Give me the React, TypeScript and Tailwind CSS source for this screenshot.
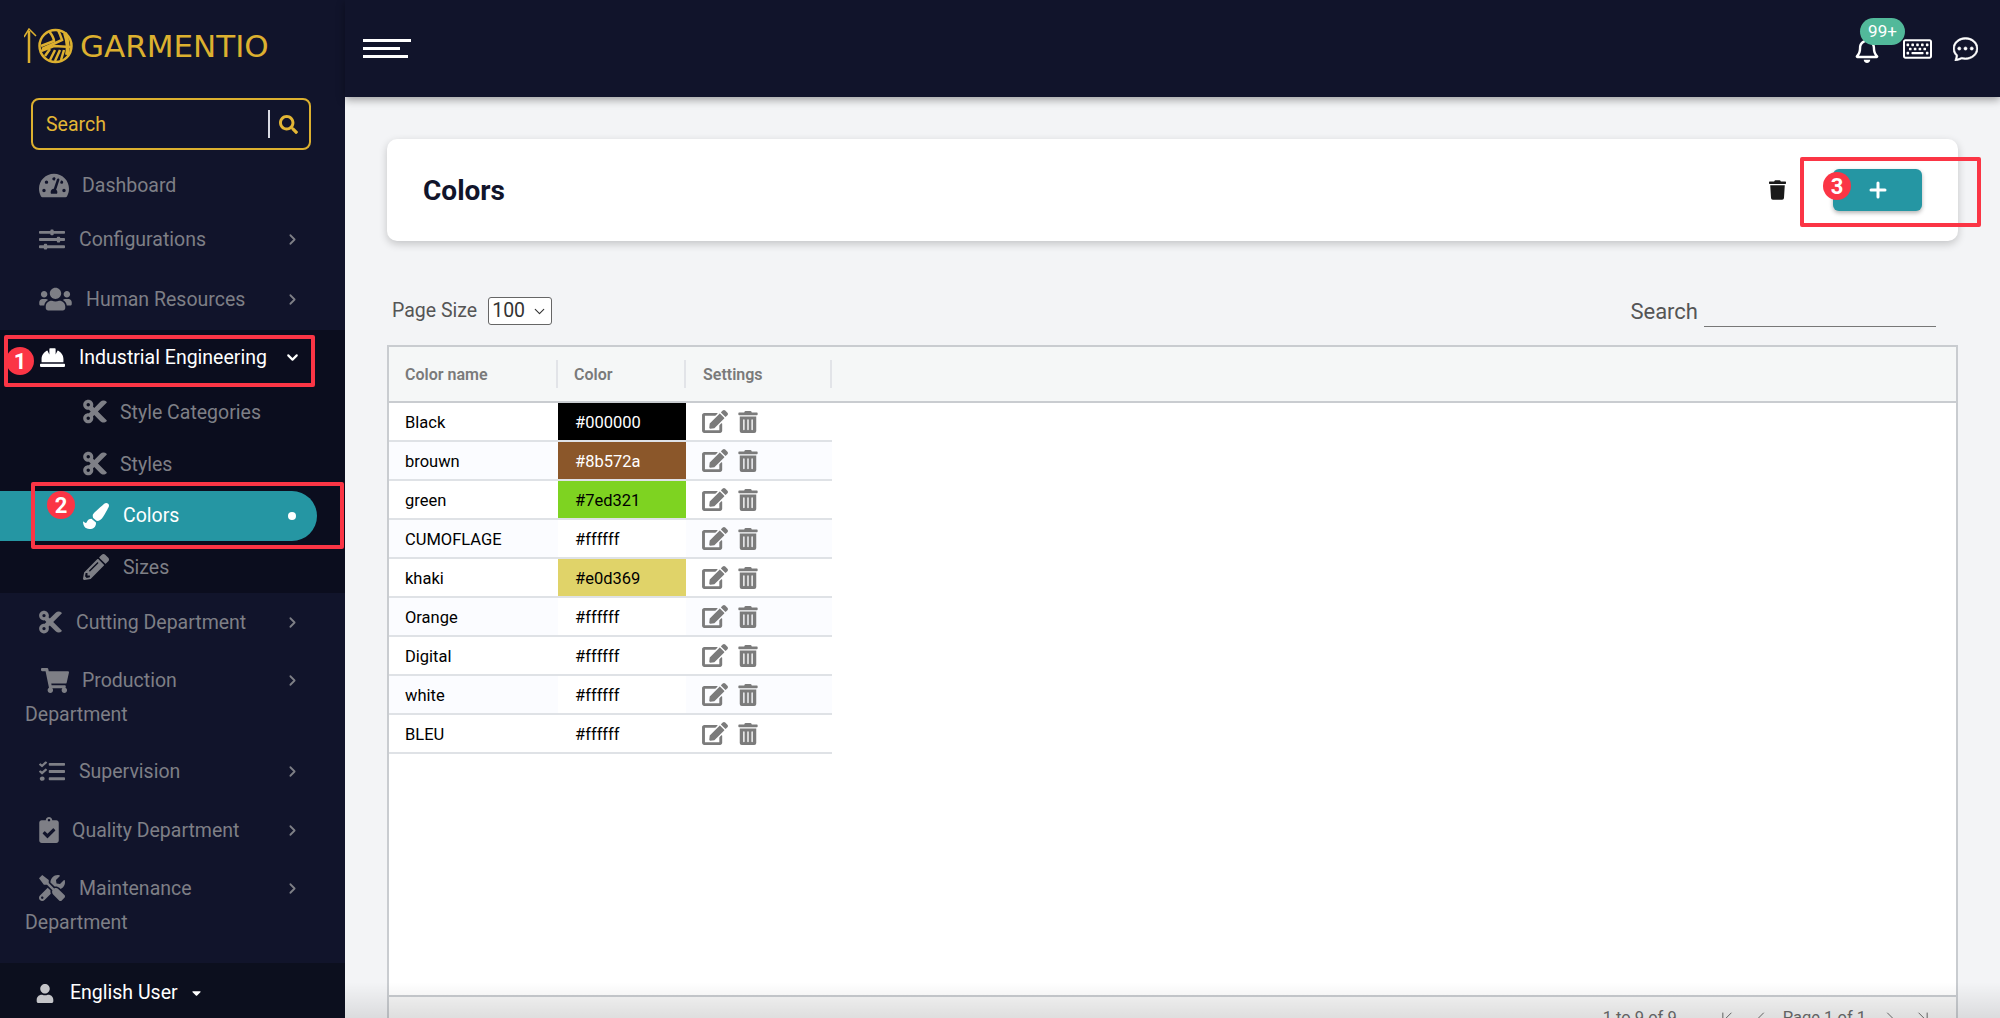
import { ChevronDown, ChevronRight, ChevronLeft, ChevronFirst, ChevronLast, Plus } from 'lucide-react';
import {
  FaTachometerAlt,
  FaSlidersH,
  FaUsers,
  FaHardHat,
  FaCut,
  FaPaintBrush,
  FaPencilAlt,
  FaShoppingCart,
  FaTasks,
  FaClipboardCheck,
  FaTools,
  FaUser,
  FaSearch,
  FaCaretDown,
  FaEdit,
  FaTrashAlt,
  FaTrash,
  FaRegBell,
  FaRegKeyboard,
} from 'react-icons/fa';
import { BsChatDots } from 'react-icons/bs';

const rows = [
  { name: 'Black', color: '#000000', cell: 'bg-[#000000] text-white' },
  { name: 'brouwn', color: '#8b572a', cell: 'bg-[#8b572a] text-white' },
  { name: 'green', color: '#7ed321', cell: 'bg-[#7ed321] text-black' },
  { name: 'CUMOFLAGE', color: '#ffffff', cell: 'bg-white text-black' },
  { name: 'khaki', color: '#e0d369', cell: 'bg-[#e0d369] text-black' },
  { name: 'Orange', color: '#ffffff', cell: 'bg-white text-black' },
  { name: 'Digital', color: '#ffffff', cell: 'bg-white text-black' },
  { name: 'white', color: '#ffffff', cell: 'bg-white text-black' },
  { name: 'BLEU', color: '#ffffff', cell: 'bg-white text-black' },
];

function Logo() {
  return (
    <svg width="50" height="36" viewBox="0 0 50 36" fill="none" className="shrink-0">
      {/* needle */}
      <path d="M5 35V3" stroke="#dcb02f" strokeWidth="2.5" />
      <path d="M0 9L5 1L12 8" stroke="#dcb02f" strokeWidth="1.5" />
      {/* yarn ball */}
      <circle cx="31.5" cy="18" r="16" fill="#11142b" stroke="#dcb02f" strokeWidth="2.5" />
      <path d="M25 3C28 7 30 10 30 13L17 18" stroke="#dcb02f" strokeWidth="2.5" />
      <path d="M34 2C36 6 37 9 38 12L18 21" stroke="#dcb02f" strokeWidth="2.5" />
      <path d="M41 5C43 11 45 18 43 27" stroke="#dcb02f" strokeWidth="4" />
      <path d="M17 23L30 18L47 19" stroke="#dcb02f" strokeWidth="2.5" />
      <path d="M21 28L26 21M26 32L31 22M31 33L36 22M37 32L40 22" stroke="#dcb02f" strokeWidth="2.5" />
    </svg>
  );
}

function NavRow({
  icon,
  label,
  box,
  height,
  arrow = true,
}: {
  icon: React.ReactNode;
  label: string;
  box: string;
  height: string;
  arrow?: boolean;
}) {
  return (
    <div className={`flex items-center pl-[39px] pr-[44px] text-[#7e7f86] ${height}`}>
      <span className={`flex items-center shrink-0 ${box}`}>{icon}</span>
      <span className="flex-1 text-[19.5px] leading-none whitespace-nowrap pt-[2px]">{label}</span>
      {arrow && <ChevronRight size={17} strokeWidth={2.5} className="shrink-0 mt-[1px]" />}
    </div>
  );
}

function SubRow({ icon, label, box, height }: { icon: React.ReactNode; label: string; box: string; height: string }) {
  return (
    <div className={`flex items-center pl-[83px] text-[#7e7f86] ${height}`}>
      <span className={`flex items-center shrink-0 ${box}`}>{icon}</span>
      <span className="text-[19.5px] leading-none pt-[3px]">{label}</span>
    </div>
  );
}

function Sidebar() {
  return (
    <aside className="w-[345px] h-[1018px] shrink-0 bg-[#11142b] flex flex-col">
      <div className="h-[98px] flex items-center pl-[24px] pb-[6px] gap-[6px]">
        <Logo />
        <span className="[font-family:'DejaVu_Sans',sans-serif] text-[31px] leading-none text-[#dcb02f]">GARMENTIO</span>
      </div>
      <div className="ml-[31px] w-[280px] h-[52px] border-2 border-[#dcb02f] rounded-[8px] flex items-center pl-[13px] text-[#e3b635]">
        <span className="flex-1 text-[19.5px] leading-none pt-[1px]">Search</span>
        <span className="w-[2px] h-[28px] bg-[#d9dbe4] mr-[9px]" />
        <FaSearch className="w-[19px] h-[19px] mr-[11px]" />
      </div>
      <div className="h-[8px]" />
      <NavRow icon={<FaTachometerAlt className="w-[30px] h-[27px]" />} label="Dashboard" box="w-[43px]" height="h-[54px]" arrow={false} />
      <NavRow icon={<FaSlidersH preserveAspectRatio="none" className="w-[26px] h-[23px]" />} label="Configurations" box="w-[40px]" height="h-[54px]" />
      <NavRow icon={<FaUsers className="w-[33px] h-[26px]" />} label="Human Resources" box="w-[47px]" height="h-[65px]" />
      <div className="h-[263px] -mt-[1px] bg-[#0b0d1e]">
        <div className="flex items-center pl-[39px] pr-[44px] h-[54px] text-white">
          <span className="flex items-center shrink-0 w-[40px]">
            <FaHardHat className="w-[31px] h-[25px] -ml-[2px]" />
          </span>
          <span className="flex-1 text-[19.5px] leading-none whitespace-nowrap pt-[2px]">Industrial Engineering</span>
          <ChevronDown size={17} strokeWidth={3} className="mt-[1px]" />
        </div>
        <SubRow icon={<FaCut className="w-[24px] h-[27px]" />} label="Style Categories" box="w-[37px]" height="h-[54px]" />
        <SubRow icon={<FaCut className="w-[24px] h-[27px]" />} label="Styles" box="w-[37px]" height="h-[50px]" />
        <div className="mt-[3px] h-[50px] w-[317px] bg-[#2596a3] rounded-r-[25px] flex items-center pl-[83px] pr-[21px] text-white">
          <span className="flex items-center shrink-0 w-[40px]">
            <FaPaintBrush className="w-[26px] h-[26px]" />
          </span>
          <span className="flex-1 text-[19.5px] leading-none">Colors</span>
          <span className="w-[8px] h-[8px] rounded-full bg-white" />
        </div>
        <div className="flex items-center pl-[83px] text-[#7e7f86] h-[52px]">
          <span className="flex items-center shrink-0 w-[40px]">
            <FaPencilAlt className="w-[26px] h-[26px]" />
          </span>
          <span className="text-[19.5px] leading-none pt-[2px]">Sizes</span>
        </div>
      </div>
      <NavRow icon={<FaCut className="w-[23px] h-[26px]" />} label="Cutting Department" box="w-[37px]" height="h-[58px]" />
      <div className="pt-[14px]">
        <NavRow icon={<FaShoppingCart className="w-[28px] h-[25px] ml-[2px]" />} label="Production" box="w-[43px]" height="h-[30px]" />
        <div className="h-[38px] flex items-center pl-[25px] pt-[2px] text-[19.5px] leading-none text-[#7e7f86]">Department</div>
      </div>
      <NavRow icon={<FaTasks preserveAspectRatio="none" className="w-[26px] h-[23px]" />} label="Supervision" box="w-[40px]" height="h-[76px]" />
      <NavRow icon={<FaClipboardCheck className="w-[20px] h-[26px]" />} label="Quality Department" box="w-[33px]" height="h-[42px]" />
      <div className="pt-[22px]">
        <NavRow icon={<FaTools className="w-[26px] h-[26px]" />} label="Maintenance" box="w-[40px]" height="h-[30px]" />
        <div className="h-[38px] flex items-center pl-[25px] pt-[2px] text-[19.5px] leading-none text-[#7e7f86]">Department</div>
      </div>
      <div className="mt-auto h-[55px] bg-[#0c0f1e] flex items-center pl-[36px] pt-[5px] text-white">
        <FaUser className="w-[18px] h-[19px] mr-[16px] text-[#c4c4c8]" />
        <span className="text-[19.5px] leading-none">English User</span>
        <FaCaretDown className="w-[11px] h-[14px] ml-[13px]" />
      </div>
    </aside>
  );
}

function Grid() {
  return (
    <div className="mt-[20px] mx-[42px] h-[698px] shrink-0 border-2 border-[#c9ccd0] bg-white flex flex-col">
      <div className="h-[56px] shrink-0 bg-[#f5f7f7] border-b-2 border-[#c9ccd0] flex items-center text-[16px] font-semibold text-[#7a7a7a]">
        <div className="w-[169px] h-[28px] pl-[16px] pt-[1px] flex items-center border-r-2 border-[#e2e4e8]">Color name</div>
        <div className="w-[128px] h-[28px] pl-[16px] pt-[1px] flex items-center border-r-2 border-[#e2e4e8]">Color</div>
        <div className="w-[146px] h-[28px] pl-[17px] pt-[1px] flex items-center border-r-2 border-[#e2e4e8]">Settings</div>
      </div>
      <div className="flex-1 flex flex-col">
        {rows.map((r, i) => (
          <div key={r.name} className={`w-[443px] h-[39px] border-b-2 border-[#dfe2e6] flex text-[16.5px] leading-none ${i % 2 ? 'bg-[#fbfcff]' : 'bg-white'}`}>
            <div className="w-[169px] pl-[16px] pt-[3px] flex items-center text-black">{r.name}</div>
            <div className={`w-[128px] pl-[17px] pt-[3px] flex items-center ${r.cell}`}>{r.color}</div>
            <div className="flex-1 pl-[16px] flex items-center gap-[10px] text-[#7b7b7b]">
              <FaEdit className="w-[26px] h-[23px]" />
              <FaTrashAlt className="w-[20px] h-[22px]" />
            </div>
          </div>
        ))}
      </div>
      <div className="h-[46px] shrink-0 border-t-2 border-[#c9ccd0] bg-[#f7f7f7] flex items-center justify-end pr-[23px] pb-[2px] text-[16.5px] text-[#6b6b6b]">
        <span>1 to 9 of 9</span>
        <ChevronFirst size={20} strokeWidth={1.2} className="ml-[40px]" />
        <ChevronLeft size={20} strokeWidth={1.2} className="ml-[14px]" />
        <span className="ml-[12px]">Page 1 of 1</span>
        <ChevronRight size={20} strokeWidth={1.2} className="ml-[14px]" />
        <ChevronLast size={20} strokeWidth={1.2} className="ml-[13px]" />
      </div>
    </div>
  );
}

function Annotations() {
  return (
    <>
      <div className="absolute left-[4px] top-[335px] w-[311px] h-[52px] border-[4px] border-[#fb3545] rounded-[2px]" />
      <div className="absolute left-[31px] top-[482px] w-[313px] h-[67px] border-[4px] border-[#fb3545] rounded-[2px]" />
      <div className="absolute left-[1800px] top-[157px] w-[181px] h-[70px] border-[4px] border-[#fb3545] rounded-[2px]" />
      <div className="absolute left-[6px] top-[347px] w-[28px] h-[28px] rounded-full bg-[#fb3545] text-white text-[22px] font-bold flex items-center justify-center">1</div>
      <div className="absolute left-[47px] top-[491px] w-[28px] h-[28px] rounded-full bg-[#fb3545] text-white text-[22px] font-bold flex items-center justify-center">2</div>
      <div className="absolute left-[1823px] top-[172px] w-[28px] h-[28px] rounded-full bg-[#fb3545] text-white text-[22px] font-bold flex items-center justify-center">3</div>
    </>
  );
}

export default function App() {
  return (
    <div className="relative w-[2000px] h-[1018px] overflow-hidden flex [font-family:Roboto,sans-serif]">
      <Sidebar />
      <main className="flex-1 min-w-0 bg-[#f3f4f6] flex flex-col">
        <header className="h-[97px] shrink-0 bg-[#11142b] shadow-[0_3px_8px_rgba(0,0,0,0.35)] flex items-center pl-[18px] pr-[22px] text-white">
          <div className="flex flex-col gap-[5px] mr-auto">
            <span className="w-[48px] h-[3px] bg-white" />
            <span className="w-[37px] h-[3px] bg-white" />
            <span className="w-[45px] h-[3px] bg-white" />
          </div>
          <div className="relative mr-[24px] mt-[2px]">
            <FaRegBell className="w-[24px] h-[26px]" />
            <span className="absolute left-[5px] -top-[19px] w-[45px] h-[27px] rounded-full bg-[#52b99a] text-white text-[17px] leading-[27px] text-center">99+</span>
          </div>
          <FaRegKeyboard className="w-[29px] h-[26px] mr-[21px]" />
          <BsChatDots stroke="currentColor" strokeWidth={0.4} className="w-[25px] h-[25px]" />
        </header>
        <section className="mt-[42px] mx-[42px] h-[102px] shrink-0 bg-white rounded-[10px] shadow-[0_3px_8px_rgba(0,0,0,0.2)] flex items-center pl-[36px] pr-[36px]">
          <h1 className="flex-1 text-[28px] font-bold text-[#11142b] pt-[2px]">Colors</h1>
          <FaTrash className="w-[17px] h-[20px] text-[#1a1a1a] mr-[47px]" />
          <button className="w-[89px] h-[42px] rounded-[6px] bg-[#2596a3] text-white flex items-center justify-center shadow-[0_2px_4px_rgba(0,0,0,0.3)]">
            <Plus size={24} strokeWidth={3} />
          </button>
        </section>
        <div className="mt-[56px] mx-[42px] h-[28px] shrink-0 flex items-center pl-[5px] text-[19.5px] text-[#555555]">
          <span>Page Size</span>
          <div className="ml-[11px] w-[64px] h-[28px] border border-[#666666] rounded-[3px] bg-white flex items-center justify-center gap-[6px] text-[#333333]">
            100
            <ChevronDown size={17} strokeWidth={1.6} />
          </div>
          <span className="ml-auto text-[22px]">Search</span>
          <span className="ml-[6px] mr-[22px] mt-[30px] w-[232px] border-b border-[#777777]" />
        </div>
        <Grid />
      </main>
      <div className="absolute left-[345px] right-0 bottom-0 h-[36px] bg-gradient-to-t from-black/10 to-transparent pointer-events-none" />
      <Annotations />
    </div>
  );
}
